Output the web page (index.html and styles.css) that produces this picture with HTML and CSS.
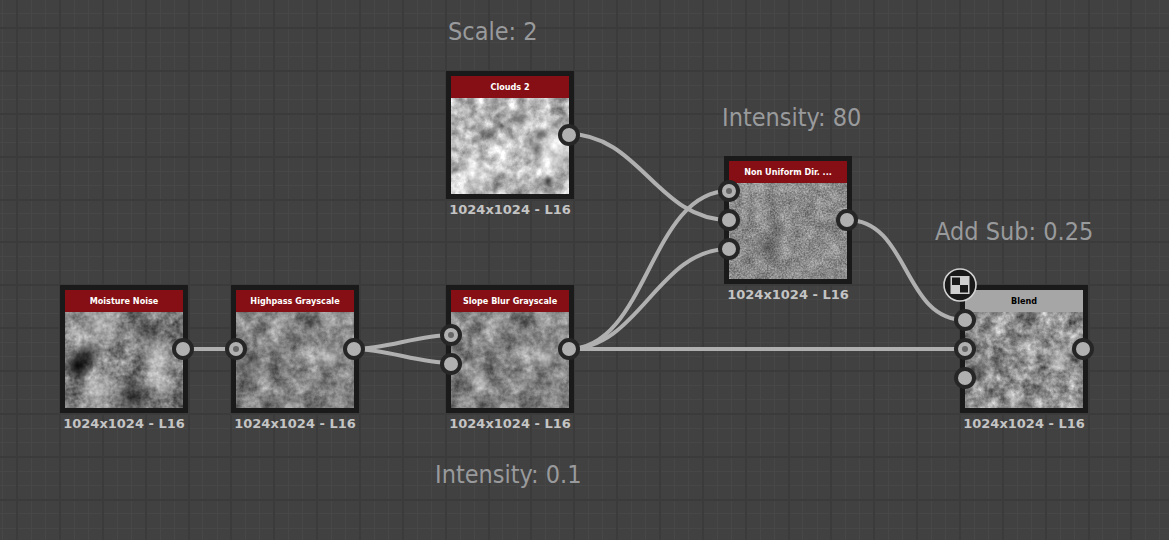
FILE: index.html
```html
<!DOCTYPE html>
<html lang="en">
<head>
<meta charset="utf-8">
<meta name="viewport" content="width=device-width, initial-scale=1">
<title>Node graph</title>
<link rel="stylesheet" href="styles.css">
</head>
<body>
<main class="graph">
  <svg class="wires" aria-hidden="true">
    <defs>
      <pattern id="grid" x="17" y="28" width="300" height="300" patternUnits="userSpaceOnUse">
        <path class="grid-minor" d="M14.500 0V300M28.500 0V300M57.500 0V300M71.500 0V300M100.500 0V300M114.500 0V300M143.500 0V300M157.500 0V300M185.500 0V300M200.500 0V300M228.500 0V300M242.500 0V300M271.500 0V300M285.500 0V300M0 14.500H300M0 28.500H300M0 57.500H300M0 71.500H300M0 100.500H300M0 114.500H300M0 143.500H300M0 157.500H300M0 185.500H300M0 200.500H300M0 228.500H300M0 242.500H300M0 271.500H300M0 285.500H300"/>
        <path class="grid-major" d="M0 0V300M43 0V300M86 0V300M129 0V300M172 0V300M214 0V300M257 0V300M300 0V300M0 0H300M0 43H300M0 86H300M0 129H300M0 172H300M0 214H300M0 257H300M0 300H300"/>
      </pattern>
      <filter id="moisture" x="0" y="0" width="100%" height="100%" color-interpolation-filters="sRGB">
        <feTurbulence type="fractalNoise" baseFrequency="0.05" numOctaves="5" seed="3"/>
        <feColorMatrix values="1 0 0 0 0 1 0 0 0 0 1 0 0 0 0 0 0 0 0 1" result="a"/>
        <feTurbulence type="fractalNoise" baseFrequency="0.25" numOctaves="3" seed="8"/>
        <feColorMatrix values="1 0 0 0 0 1 0 0 0 0 1 0 0 0 0 0 0 0 0 1"/>
        <feComposite in2="a" operator="arithmetic" k2="0.400" k3="0.700" k4="-0.060"/>
      </filter>
      <filter id="highpass" x="0" y="0" width="100%" height="100%" color-interpolation-filters="sRGB">
        <feTurbulence type="fractalNoise" baseFrequency="0.06" numOctaves="5" seed="12"/>
        <feColorMatrix values="1 0 0 0 0 1 0 0 0 0 1 0 0 0 0 0 0 0 0 1" result="a"/>
        <feTurbulence type="fractalNoise" baseFrequency="0.23" numOctaves="3" seed="8"/>
        <feColorMatrix values="1 0 0 0 0 1 0 0 0 0 1 0 0 0 0 0 0 0 0 1"/>
        <feComposite in2="a" operator="arithmetic" k2="0.270" k3="0.600" k4="0.080"/>
      </filter>
      <filter id="blend" x="0" y="0" width="100%" height="100%" color-interpolation-filters="sRGB">
        <feTurbulence type="fractalNoise" baseFrequency="0.07" numOctaves="5" seed="12"/>
        <feColorMatrix values="1 0 0 0 0 1 0 0 0 0 1 0 0 0 0 0 0 0 0 1" result="a"/>
        <feTurbulence type="fractalNoise" baseFrequency="0.22" numOctaves="3" seed="8"/>
        <feColorMatrix values="1 0 0 0 0 1 0 0 0 0 1 0 0 0 0 0 0 0 0 1"/>
        <feComposite in2="a" operator="arithmetic" k2="0.400" k3="0.700" k4="0.010"/>
      </filter>
      <filter id="clouds" x="0" y="0" width="100%" height="100%" color-interpolation-filters="sRGB">
        <feTurbulence type="fractalNoise" baseFrequency="0.05" numOctaves="5" seed="21"/>
        <feColorMatrix values="1 0 0 0 0 1 0 0 0 0 1 0 0 0 0 0 0 0 0 1" result="a"/>
        <feTurbulence type="fractalNoise" baseFrequency="0.12" numOctaves="4" seed="4"/>
        <feColorMatrix values="1 0 0 0 0 1 0 0 0 0 1 0 0 0 0 0 0 0 0 1"/>
        <feComposite in2="a" operator="arithmetic" k2="0.550" k3="0.700" k4="0.110"/>
      </filter>
      <filter id="grain" x="0" y="0" width="100%" height="100%" color-interpolation-filters="sRGB">
        <feTurbulence type="fractalNoise" baseFrequency="0.08" numOctaves="4" seed="6"/>
        <feColorMatrix values="1 0 0 0 0 1 0 0 0 0 1 0 0 0 0 0 0 0 0 1" result="a"/>
        <feTurbulence type="fractalNoise" baseFrequency="0.6" numOctaves="2" seed="5"/>
        <feColorMatrix values="1 0 0 0 0 1 0 0 0 0 1 0 0 0 0 0 0 0 0 1"/>
        <feComposite in2="a" operator="arithmetic" k2="0.420" k3="0.300" k4="0.180"/>
      </filter>
      <radialGradient id="shade"><stop offset="0" stop-color="#000" stop-opacity="1"/><stop offset="1" stop-color="#000" stop-opacity="0"/></radialGradient>
      <radialGradient id="glow"><stop offset="0" stop-color="#fff" stop-opacity="1"/><stop offset="1" stop-color="#fff" stop-opacity="0"/></radialGradient>
    </defs>
    <rect width="100%" height="100%" fill="url(#grid)"/>
    <g class="links">
      <path d="M183 349H236"/>
      <path d="M354 349C386 349 419 335 451 335"/>
      <path d="M354 349C386 349 419 363 451 363"/>
      <path d="M568 134C640 134 657 220 729 220"/>
      <path d="M568 349C648 349 649 191 729 191"/>
      <path d="M568 349C640 349 657 249 729 249"/>
      <path d="M568 349H965"/>
      <path d="M847 220C910 220 902 320 965 320"/>
    </g>
  </svg>

  <p class="note note-scale">Scale: 2</p>
  <p class="note note-dir">Intensity: 80</p>
  <p class="note note-add">Add Sub: 0.25</p>
  <p class="note note-slope">Intensity: 0.1</p>

  <article class="node node-clouds">
    <div class="card">
      <h2 class="title">Clouds 2</h2>
      <svg class="preview" aria-hidden="true"><rect width="100%" height="100%" filter="url(#clouds)"/><circle cx="104" cy="50" r="30" fill="url(#glow)" opacity="0.600"/><circle cx="25" cy="75" r="24" fill="url(#glow)" opacity="0.400"/><circle cx="88" cy="36" r="9" fill="url(#shade)" opacity="0.500"/><circle cx="85" cy="52" r="9" fill="url(#shade)" opacity="0.500"/><circle cx="97" cy="83" r="7" fill="url(#shade)" opacity="0.600"/><circle cx="68" cy="20" r="12" fill="url(#shade)" opacity="0.400"/><circle cx="38" cy="36" r="10" fill="url(#shade)" opacity="0.400"/></svg>
      <div class="ports ports-out"><span class="port"></span></div>
    </div>
    <p class="format">1024x1024 - L16</p>
  </article>

  <article class="node node-dir">
    <div class="card">
      <h2 class="title">Non Uniform Dir. ...</h2>
      <svg class="preview" aria-hidden="true"><rect width="100%" height="100%" filter="url(#grain)"/><circle cx="38" cy="65" r="18" fill="url(#shade)" opacity="0.300"/><circle cx="50" cy="46" r="12" fill="url(#shade)" opacity="0.250"/></svg>
      <div class="ports ports-in"><span class="port port-main"></span><span class="port"></span><span class="port"></span></div>
      <div class="ports ports-out"><span class="port"></span></div>
    </div>
    <p class="format">1024x1024 - L16</p>
  </article>

  <article class="node node-moisture">
    <div class="card">
      <h2 class="title">Moisture Noise</h2>
      <svg class="preview" aria-hidden="true"><rect width="100%" height="100%" filter="url(#moisture)"/><circle cx="92" cy="45" r="24" fill="url(#glow)" opacity="0.500"/><circle cx="32" cy="16" r="34" fill="url(#glow)" opacity="0.450"/><circle cx="34" cy="76" r="26" fill="url(#glow)" opacity="0.450"/><circle cx="96" cy="72" r="18" fill="url(#glow)" opacity="0.400"/><circle cx="12" cy="54" r="17" fill="url(#shade)" opacity="0.900"/><circle cx="22" cy="43" r="18" fill="url(#shade)" opacity="0.600"/><circle cx="70" cy="84" r="24" fill="url(#shade)" opacity="0.550"/><circle cx="80" cy="20" r="26" fill="url(#shade)" opacity="0.350"/></svg>
      <div class="ports ports-out"><span class="port"></span></div>
    </div>
    <p class="format">1024x1024 - L16</p>
  </article>

  <article class="node node-highpass">
    <div class="card">
      <h2 class="title">Highpass Grayscale</h2>
      <svg class="preview" aria-hidden="true"><rect width="100%" height="100%" filter="url(#highpass)"/><circle cx="92" cy="45" r="17" fill="url(#glow)" opacity="0.350"/><circle cx="13" cy="54" r="15" fill="url(#shade)" opacity="0.350"/></svg>
      <div class="ports ports-in"><span class="port port-main"></span></div>
      <div class="ports ports-out"><span class="port"></span></div>
    </div>
    <p class="format">1024x1024 - L16</p>
  </article>

  <article class="node node-slope">
    <div class="card">
      <h2 class="title">Slope Blur Grayscale</h2>
      <svg class="preview" aria-hidden="true"><rect width="100%" height="100%" filter="url(#highpass)"/><circle cx="92" cy="45" r="17" fill="url(#glow)" opacity="0.350"/><circle cx="31" cy="70" r="14" fill="url(#glow)" opacity="0.250"/></svg>
      <div class="ports ports-in"><span class="port port-main"></span><span class="port"></span></div>
      <div class="ports ports-out"><span class="port"></span></div>
    </div>
    <p class="format">1024x1024 - L16</p>
  </article>

  <article class="node node-blend">
    <div class="card">
      <h2 class="title title-atomic">Blend</h2>
      <svg class="preview" aria-hidden="true"><rect width="100%" height="100%" filter="url(#blend)"/><circle cx="92" cy="45" r="15" fill="url(#glow)" opacity="0.400"/><circle cx="52" cy="88" r="10" fill="url(#glow)" opacity="0.450"/><circle cx="15" cy="56" r="15" fill="url(#shade)" opacity="0.350"/></svg>
      <div class="ports ports-in"><span class="port"></span><span class="port port-main"></span><span class="port"></span></div>
      <div class="ports ports-out"><span class="port"></span></div>
      <svg class="badge" viewBox="0 0 34 34" role="img" aria-label="Blending">
        <circle cx="17" cy="17" r="16" fill="#191919" stroke="#d2d2d2" stroke-width="1.600"/>
        <rect x="7.500" y="8" width="19" height="18" fill="#cfcfcf"/>
        <path d="M9 9.500h8v7.500H9zM17 17h8v7.500h-8z" fill="#191919"/>
      </svg>
    </div>
    <p class="format">1024x1024 - L16</p>
  </article>
</main>
</body>
</html>
```
FILE: styles.css
```css
* {
  box-sizing: border-box;
}

body {
  margin: 0;
  background: #414141;
  font-family: "DejaVu Sans Condensed", "DejaVu Sans", sans-serif;
}

.graph {
  position: relative;
  min-height: 100vh;
  overflow: hidden;
}

.wires {
  position: absolute;
  inset: 0;
  width: 100%;
  height: 100%;
}

.grid-minor {
  stroke: #474747;
  stroke-width: 1;
}

.grid-major {
  stroke: #3b3b3b;
  stroke-width: 2;
}

.links {
  fill: none;
  stroke: #b0b0b0;
  stroke-width: 4;
}

.note {
  position: absolute;
  margin: 0;
  color: #999a9c;
  font-size: 25px;
  line-height: 30px;
  white-space: nowrap;
}

.note-scale { left: 448px; top: 17px; }
.note-dir { left: 722px; top: 103px; }
.note-add { left: 935px; top: 217px; }
.note-slope { left: 435px; top: 460px; }

.node {
  position: absolute;
  width: 128px;
}

.node-clouds { left: 446px; top: 71px; }
.node-dir { left: 724px; top: 156px; }
.node-moisture { left: 60px; top: 285px; }
.node-highpass { left: 231px; top: 285px; }
.node-slope { left: 446px; top: 285px; }
.node-blend { left: 960px; top: 285px; }

.card {
  position: relative;
  display: flex;
  flex-direction: column;
  height: 128px;
  padding: 5px;
  background: #1a1a1a;
}

.title {
  margin: 0;
  background: #850f14;
  color: #fff;
  font-size: 9px;
  font-weight: 700;
  line-height: 22px;
  text-align: center;
  white-space: nowrap;
}

.title-atomic {
  background: #a6a6a6;
  color: #000;
}

.preview {
  display: block;
  flex: 1;
  width: 100%;
  min-height: 0;
}

.ports {
  position: absolute;
  top: 0;
  bottom: 0;
  display: flex;
  flex-direction: column;
  justify-content: center;
  gap: 7px;
}

.ports-in { left: -6px; }
.ports-out { right: -6px; }

.port {
  display: flex;
  align-items: center;
  justify-content: center;
  width: 22px;
  height: 22px;
  border: 4px solid #262626;
  border-radius: 50%;
  background: #b0b0b0;
}

.port-main::before {
  content: "";
  width: 6px;
  height: 6px;
  border-radius: 50%;
  background: #666;
}

.badge {
  position: absolute;
  left: -17px;
  top: -17px;
  width: 34px;
  height: 34px;
}

.format {
  margin: 3px 0 0;
  color: #c4c4c4;
  font-family: "DejaVu Sans", sans-serif;
  font-size: 13px;
  font-weight: 700;
  line-height: 16px;
  text-align: center;
  white-space: nowrap;
}
```
